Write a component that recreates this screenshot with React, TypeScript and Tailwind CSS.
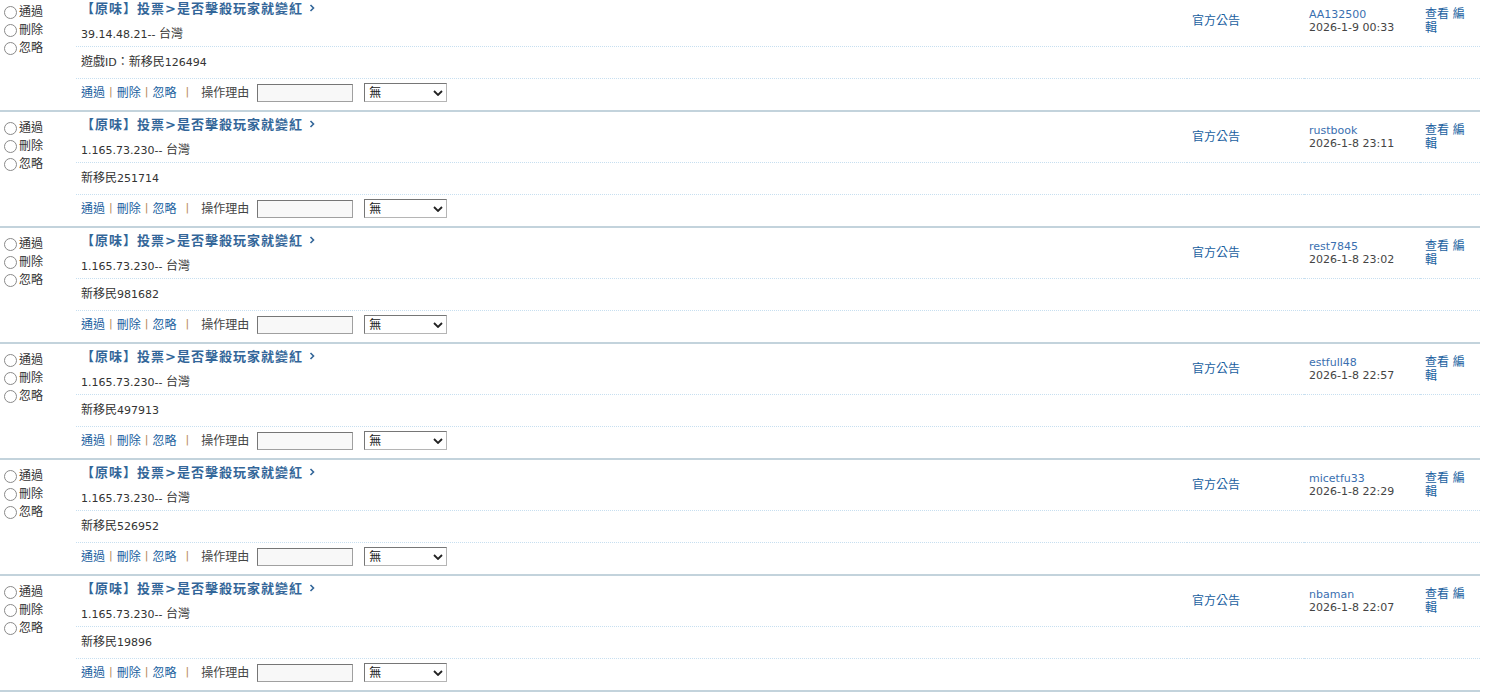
import { Fragment } from 'react';

interface ReviewItem {
  id: number;
  ip: string;
  note: string;
  user: string;
  time: string;
}

const items: ReviewItem[] = [
  { id: 1, ip: '39.14.48.21-- 台灣', note: '遊戲ID：新移民126494', user: 'AA132500', time: '2026-1-9 00:33' },
  { id: 2, ip: '1.165.73.230-- 台灣', note: '新移民251714', user: 'rustbook', time: '2026-1-8 23:11' },
  { id: 3, ip: '1.165.73.230-- 台灣', note: '新移民981682', user: 'rest7845', time: '2026-1-8 23:02' },
  { id: 4, ip: '1.165.73.230-- 台灣', note: '新移民497913', user: 'estfull48', time: '2026-1-8 22:57' },
  { id: 5, ip: '1.165.73.230-- 台灣', note: '新移民526952', user: 'micetfu33', time: '2026-1-8 22:29' },
  { id: 6, ip: '1.165.73.230-- 台灣', note: '新移民19896', user: 'nbaman', time: '2026-1-8 22:07' },
];

const TITLE = '【原味】投票>是否擊殺玩家就變紅';

// CJK runs are drawn a pixel bigger than the latin text, like the original page
function Txt({ t }: { t: string }) {
  const parts = t.split(/([\u3000-\u9fff\uff00-\uffef]+)/);
  return (
    <>
      {parts.map((p, i) =>
        i % 2 === 1 ? (
          <span key={i} className="text-[12px]">{p}</span>
        ) : (
          <Fragment key={i}>{p}</Fragment>
        )
      )}
    </>
  );
}

function Radio({ label }: { label: string }) {
  return (
    <label className="flex items-center h-[18px]">
      <span className="ml-[4px] mr-[2px] mt-[1px] w-[13px] h-[13px] rounded-full border border-[#8a8a8a] bg-white" />
      <span className="text-[12px] text-[#333]">{label}</span>
    </label>
  );
}

function Pipe({ cls }: { cls: string }) {
  return <span className={`text-[#b8875a] ${cls}`}>|</span>;
}

function Row({ item }: { item: ReviewItem }) {
  const dotted = 'border-b border-dotted border-[#c7dff0]';
  return (
    <div className="grid grid-cols-[76px_1111px_117px_116px_60px] grid-rows-[51px_32px_31px] border-b-2 border-[#c3d3dc]">
      {/* radio column */}
      <div className="row-span-3 pt-[7px] flex flex-col">
        <Radio label="通過" />
        <Radio label="刪除" />
        <Radio label="忽略" />
      </div>

      {/* title + ip */}
      <div className={`${dotted} pt-[4px] pl-[5px]`}>
        <a className="flex items-center h-[18px] text-[13px] font-bold tracking-[1px] text-[#336699] leading-[18px] cursor-pointer">
          {TITLE}
          <svg className="ml-[6px] mb-[2px]" width="6" height="8" viewBox="0 0 6 8">
            <path d="M1.5 1 L4.5 4 L1.5 7" fill="none" stroke="#336699" strokeWidth="1.6" />
          </svg>
        </a>
        <div className="mt-[7px] leading-[18px] text-[#333]">
          <Txt t={item.ip} />
        </div>
      </div>
      <div className={`${dotted} flex items-center pl-[5px]`}>
        <a className="text-[12px] text-[#1a5f9f] cursor-pointer">官方公告</a>
      </div>
      <div className={`${dotted} flex flex-col justify-center pl-[5px] leading-[13px]`}>
        <a className="text-[#3a6fb0] cursor-pointer">{item.user}</a>
        <span className="text-[#444]">{item.time}</span>
      </div>
      <div className={`${dotted} flex items-center pl-[5px] pr-[8px] leading-[14px] text-[12px] text-[#1a5f9f]`}>
        <a className="cursor-pointer">查看 編輯</a>
      </div>

      {/* note */}
      <div className={`${dotted} flex items-center pl-[5px] text-[#333]`}>
        <span>
          <Txt t={item.note} />
        </span>
      </div>
      <div className={dotted} />
      <div className={dotted} />
      <div className={dotted} />

      {/* actions */}
      <div className="flex items-center pl-[5px] pb-[4px]">
        <a className="text-[12px] text-[#1a5f9f] cursor-pointer">通過</a>
        <Pipe cls="mx-[4px]" />
        <a className="text-[12px] text-[#1a5f9f] cursor-pointer">刪除</a>
        <Pipe cls="mx-[4px]" />
        <a className="text-[12px] text-[#1a5f9f] cursor-pointer">忽略</a>
        <Pipe cls="ml-[9px]" />
        <span className="ml-[12px] text-[12px] text-[#444]">操作理由</span>
        <input
          type="text"
          className="ml-[8px] w-[96px] h-[18px] border border-[#a0a0a0] border-t-[#767676] border-l-[#767676] bg-[#f8f8f8] outline-none"
        />
        <div className="relative ml-[11px]">
          <select className="appearance-none w-[83px] h-[19px] pl-[4px] pt-[2px] border border-[#b5b5b5] border-t-[#767676] border-l-[#767676] bg-white text-[12px] text-[#222] leading-[15px] outline-none">
            <option>無</option>
          </select>
          <svg className="absolute right-[4px] top-[7px] pointer-events-none" width="10" height="6" viewBox="0 0 10 6">
            <path d="M1 1 L5 5 L9 1" fill="none" stroke="#222" strokeWidth="1.8" />
          </svg>
        </div>
      </div>
      <div />
      <div />
      <div />
    </div>
  );
}

export default function App() {
  return (
    <div className="w-[1492px] h-[693px] overflow-hidden bg-white font-['DejaVu_Sans','Noto_Sans_CJK_TC',sans-serif] text-[11px]">
      <div className="w-[1480px] -mt-[4px]">
        {items.map((item) => (
          <Row key={item.id} item={item} />
        ))}
      </div>
    </div>
  );
}
